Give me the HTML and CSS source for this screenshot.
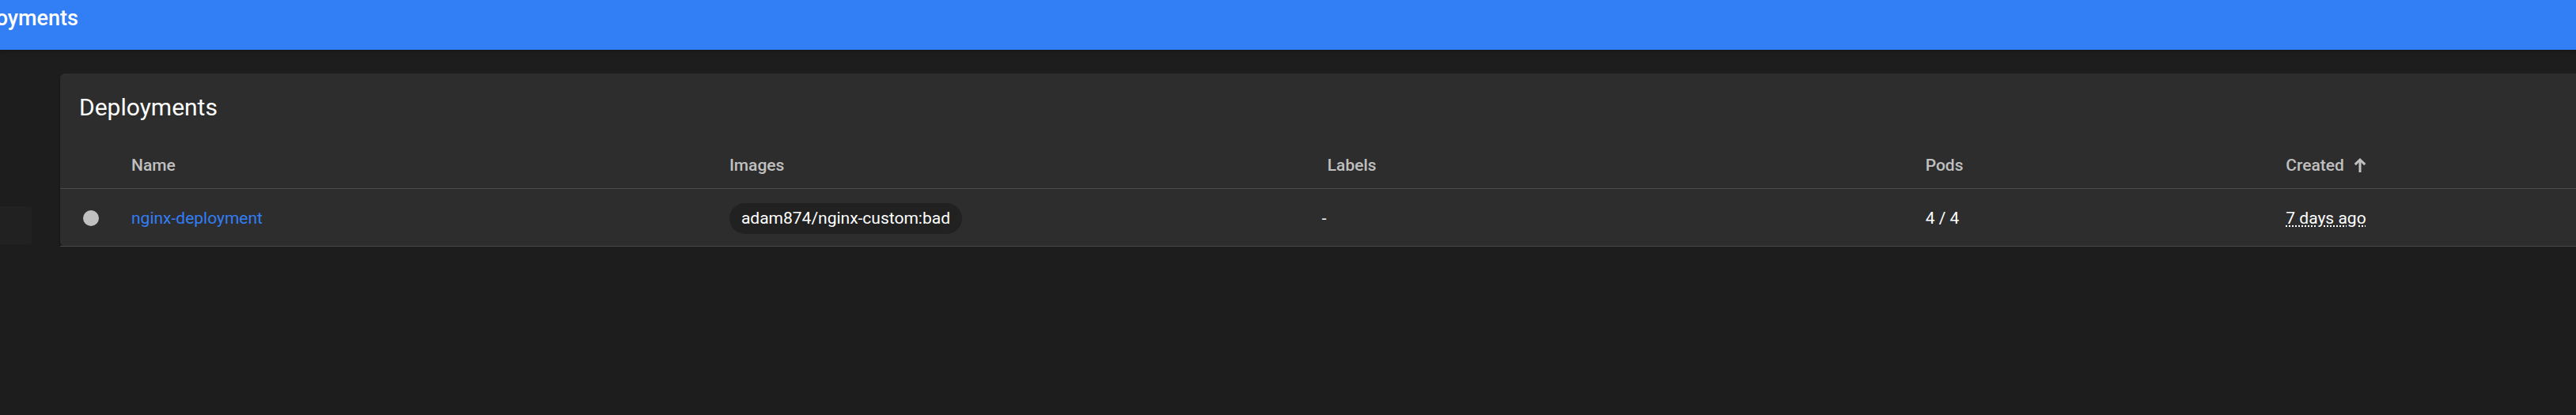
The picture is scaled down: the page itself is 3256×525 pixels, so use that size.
FILE: index.html
```html
<!DOCTYPE html>
<html lang="en">
<head>
<meta charset="utf-8">
<title>Deployments</title>
<link rel="stylesheet" href="styles.css">
</head>
<body>
<header class="toolbar"><div class="breadcrumb"><span>oyments</span></div></header>
<div class="layout">
  <nav class="sidebar"><div class="nav-item"></div></nav>
  <main class="content">
    <section class="card">
      <h1 class="card-title">Deployments</h1>
      <table class="resources">
        <colgroup>
          <col class="col-status"><col class="col-wide"><col class="col-wide"><col class="col-wide"><col class="col-pods"><col>
        </colgroup>
        <thead>
          <tr>
            <th></th><th scope="col">Name</th><th scope="col">Images</th><th scope="col">Labels</th><th scope="col">Pods</th>
            <th scope="col"><button class="sort" type="button">Created
              <svg class="arrow" viewBox="0 0 16 18" aria-hidden="true"><path d="M6.5 18V5.5L2.8 9.2L.7 7.1L8 0L15.3 7.1L13.2 9.2L9.5 5.5V18Z"/></svg></button></th>
          </tr>
        </thead>
        <tbody>
          <tr>
            <td class="status"><svg class="dot" viewBox="0 0 20 20" aria-hidden="true"><circle cx="10" cy="10" r="10"/></svg></td>
            <td><a class="link" href="#">nginx-deployment</a></td>
            <td><span class="chip">adam874/nginx-custom:bad</span></td>
            <td><div class="labels">-</div></td>
            <td>4 / 4</td>
            <td><span class="age">7 days ago</span></td>
          </tr>
        </tbody>
      </table>
    </section>
  </main>
</div>
</body>
</html>
```
FILE: styles.css
```css
* {
  box-sizing: border-box;
}

body {
  margin: 0;
  background: #1d1d1d;
  color: #fff;
  font: 21px/30px Roboto, sans-serif;
}

.toolbar {
  position: relative;
  padding: 7px 0 24px;
  background: #327ef5;
  box-shadow: 0 2px 4px rgba(0, 0, 0, 0.2);
}

.breadcrumb {
  display: flex;
  justify-content: flex-end;
  width: 99px;
  overflow: hidden;
  font-size: 27px;
  line-height: 32px;
  font-weight: 500;
}

.layout {
  display: flex;
}

.sidebar {
  width: 40px;
  padding-top: 198px;
}

.nav-item {
  height: 48px;
  border-radius: 0 3px 3px 0;
  background: #212121;
}

.content {
  flex: 1;
  padding: 30px 0 0 36px;
}

.card {
  border-radius: 6px 0 0 6px;
  background: #2d2d2d;
  box-shadow: 0 3px 3px rgba(0, 0, 0, 0.4);
}

.card-title {
  margin: 0;
  padding: 25px 24px 17px;
  font-size: 30px;
  line-height: 36px;
  font-weight: 400;
}

.resources {
  width: 100%;
  table-layout: fixed;
  border-collapse: separate;
  border-spacing: 0;
}

.col-status {
  width: 90px;
}

.col-wide {
  width: 23.77%;
}

.col-pods {
  width: 14.33%;
}

th,
td {
  padding: 0;
  border-bottom: 1px solid #494949;
  text-align: left;
  vertical-align: middle;
}

th {
  height: 68px;
  padding-top: 8px;
  color: #c0c0c0;
  font-weight: 500;
}

td {
  height: 73px;
  padding-top: 2px;
}

.status {
  padding-left: 29px;
}

.dot {
  display: block;
  width: 20px;
  height: 20px;
  fill: #c0c0c0;
}

.link {
  color: #327ef5;
  text-decoration: none;
}

.chip {
  display: inline-block;
  padding: 0 15px;
  border-radius: 20px;
  background: #212121;
  line-height: 39px;
}

.labels {
  margin-left: -7px;
}

.age {
  text-decoration: underline dotted;
}

.sort {
  display: flex;
  align-items: center;
  gap: 12px;
  padding: 0;
  border: 0;
  background: none;
  color: inherit;
  font: inherit;
}

.arrow {
  width: 16px;
  height: 18px;
  fill: #c0c0c0;
}
```
